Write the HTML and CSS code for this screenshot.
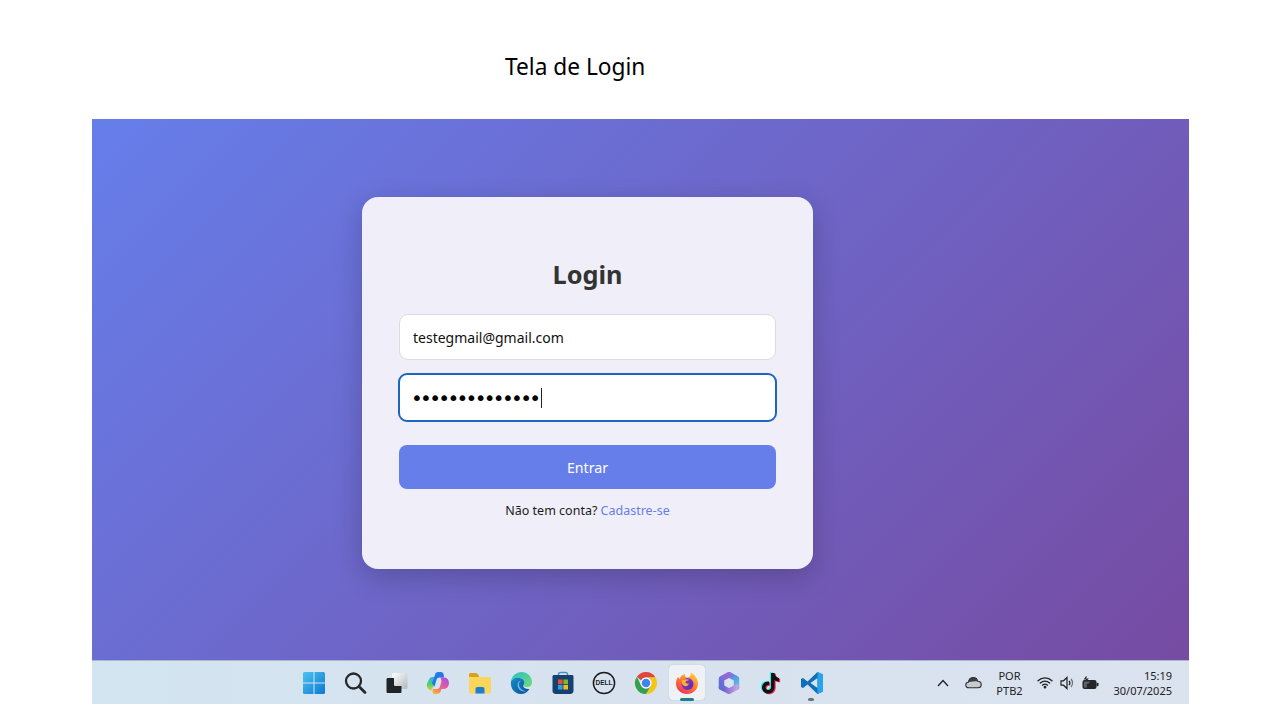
FILE: index.html
```html
<!DOCTYPE html>
<html lang="pt-BR">
<head>
  <meta charset="UTF-8">
  <title>Tela de Login</title>
  <link rel="stylesheet" href="styles.css">
</head>
<body>
  <p class="slide-title">Tela de Login</p>

  <div class="screen">
    <main class="hero">
      <div class="card">
        <h2>Login</h2>
        <div class="field">testegmail@gmail.com</div>
        <div class="field field-focus"><span class="dots">••••••••••••••</span><span class="caret"></span></div>
        <button class="btn">Entrar</button>
        <p class="signup">Não tem conta? <a href="#">Cadastre-se</a></p>
      </div>
    </main>

    <footer class="taskbar">
      <div class="apps">
        <!-- windows -->
        <div class="app">
          <svg width="24" height="24" viewBox="0 0 24 24">
            <defs>
              <linearGradient id="win" x1="0" y1="0" x2="1" y2="1">
                <stop offset="0" stop-color="#4fc3ee"/>
                <stop offset="1" stop-color="#0a78d4"/>
              </linearGradient>
            </defs>
            <path fill="url(#win)" d="M1 2.5A1.5 1.5 0 0 1 2.500 1H11.500V11.500H1ZM12.500 1H21.500A1.500 1.500 0 0 1 23 2.500V11.500H12.500ZM1 12.500H11.500V23H2.500A1.500 1.500 0 0 1 1 21.500ZM12.500 12.500H23V21.500A1.500 1.500 0 0 1 21.500 23H12.500Z"/>
          </svg>
        </div>
        <!-- search -->
        <div class="app">
          <svg width="24" height="24" viewBox="0 0 24 24" fill="none" stroke="#26282b" stroke-linecap="round">
            <circle cx="10.500" cy="10" r="7.500" stroke-width="2.300"/>
            <path d="M16 15.500 22 21.500" stroke-width="2.800"/>
          </svg>
        </div>
        <!-- task view -->
        <div class="app">
          <svg width="24" height="24" viewBox="0 0 24 24">
            <defs>
              <linearGradient id="tv" x1="0" y1="0" x2="1" y2="1">
                <stop offset="0" stop-color="#ffffff"/>
                <stop offset="1" stop-color="#b4b8bc"/>
              </linearGradient>
            </defs>
            <rect x="7" y="2" width="15.500" height="16" rx="1.500" fill="url(#tv)"/>
            <path fill="#222326" d="M3 7H9V13.500C9 14.500 9.500 15 10.500 15H16.500V20.500C16.500 21.500 16 22 15 22H3C2 22 1.500 21.500 1.500 20.500V8.500C1.500 7.500 2 7 3 7Z"/>
          </svg>
        </div>
        <!-- copilot -->
        <div class="app">
          <svg width="24" height="24" viewBox="0 0 24 24">
            <defs>
              <linearGradient id="cpA" x1="0" y1="0" x2="1" y2="1">
                <stop offset="0" stop-color="#1f8ff0"/>
                <stop offset="1" stop-color="#2b55d8"/>
              </linearGradient>
              <linearGradient id="cpB" x1="0.200" y1="1" x2="0.800" y2="0">
                <stop offset="0" stop-color="#f7b52e"/>
                <stop offset="0.450" stop-color="#f0608e"/>
                <stop offset="1" stop-color="#a84fe0"/>
              </linearGradient>
              <linearGradient id="cpC" x1="0.500" y1="0" x2="0.500" y2="1">
                <stop offset="0" stop-color="#28b4e0"/>
                <stop offset="0.550" stop-color="#4ccf6a"/>
                <stop offset="1" stop-color="#e9d03c"/>
              </linearGradient>
            </defs>
            <path fill="url(#cpC)" d="M3 8.500C3.700 6.800 5 6 7 6H10L6.500 17.500C6 19 5.200 20 3.800 19.200C1.500 17.800 0.300 15.500 1 12.800Z"/>
            <path fill="url(#cpA)" d="M9.500 2.300C10.300 1.400 11.300 1 12.500 1H15C16.200 1 17.200 1.800 17.500 3L18 6.500H13.500C12 6.500 11 7.300 10.500 8.800L8.300 16L6 12Z"/>
            <path fill="url(#cpB)" d="M14.500 6.500H18C20.200 6.500 21.700 7.500 22.500 9.500C23.500 12.500 22.800 15 21.300 16.500C20 17.800 18.500 18 17 18H15.500C15 20 13.800 23 11 23H8.500C7.300 23 6.300 22 6.500 20.500L7 18H11C12.500 18 13.500 17 14 15.500L15.500 10Z"/>
          </svg>
        </div>
        <!-- file explorer -->
        <div class="app">
          <svg width="24" height="24" viewBox="0 0 24 24">
            <path fill="#d9a21b" d="M1 3.500C1 2.700 1.700 2 2.500 2H8.500L11 4.500V8H1Z"/>
            <path fill="#fbd65a" d="M1 6H21.500C22.300 6 23 6.700 23 7.500V21C23 21.800 22.300 22.500 21.500 22.500H2.500C1.700 22.500 1 21.800 1 21Z"/>
            <path fill="#1b7fcf" d="M7.500 18C7.500 16.900 8.200 16 9.500 16H14.500C15.800 16 16.500 16.900 16.500 18V22.500H7.500Z"/>
          </svg>
        </div>
        <!-- edge -->
        <div class="app">
          <svg width="24" height="24" viewBox="0 0 24 24">
            <defs>
              <linearGradient id="edgeA" x1="0" y1="0" x2="1" y2="1">
                <stop offset="0" stop-color="#0f8fc8"/>
                <stop offset="1" stop-color="#0c4f9e"/>
              </linearGradient>
              <linearGradient id="edgeB" x1="0" y1="0" x2="1" y2="1">
                <stop offset="0" stop-color="#2cc0c8"/>
                <stop offset="1" stop-color="#6fdc72"/>
              </linearGradient>
            </defs>
            <path fill="url(#edgeB)" d="M2 10C3 4.500 7.500 1 12.500 1C18.500 1 23 5.500 23 11.500C23 14.500 21 16 18.500 16C16 16 14.500 15.300 14 14.500C15.500 13.500 16 12 15.500 10.500C14.500 7.500 11.500 6.500 8.500 6.800C5.500 7.100 3.300 8.300 2 10Z"/>
            <path fill="url(#edgeA)" d="M2 10C4 7.500 7 6.300 10 6.800C13.500 7.300 15.500 9.500 15.500 11.500C15.500 12.800 14.800 13.800 14 14.500C14.500 17 17 18.500 20.500 18C18.500 21 15.500 23 12 23C5.500 23 1 17.500 2 10Z"/>
            <path fill="#e9f2f8" d="M8.500 14C8.500 11.500 10 9.800 12 9.800C9.800 11 9.500 13.500 10.500 15.800C11.500 18 14 19.800 17 20.200C13 21.300 8.500 18.500 8.500 14Z" opacity="0.500"/>
          </svg>
        </div>
        <!-- store -->
        <div class="app">
          <svg width="24" height="24" viewBox="0 0 24 24">
            <path fill="none" stroke="#4a94c4" stroke-width="1.500" d="M7.500 5V3.500C7.500 2.300 8.300 1.500 9.500 1.500H14.500C15.700 1.500 16.500 2.300 16.500 3.500V5"/>
            <path fill="#16406f" d="M1.500 5.500C1.500 4.700 2.200 4 3 4H21C21.800 4 22.500 4.700 22.500 5.500V20C22.500 21.600 21.100 23 19.500 23H4.500C2.900 23 1.500 21.600 1.500 20Z"/>
            <rect x="7" y="8.500" width="4.600" height="4.600" fill="#ea4f2a"/>
            <rect x="12.400" y="8.500" width="4.600" height="4.600" fill="#7fb927"/>
            <rect x="7" y="13.900" width="4.600" height="4.600" fill="#2a9fe8"/>
            <rect x="12.400" y="13.900" width="4.600" height="4.600" fill="#fbbb12"/>
          </svg>
        </div>
        <!-- dell -->
        <div class="app">
          <svg width="24" height="24" viewBox="0 0 24 24">
            <circle cx="12" cy="12" r="10.600" fill="none" stroke="#1a1c20" stroke-width="1.500"/>
            <text class="dell-text" x="12" y="14.200" text-anchor="middle">DELL</text>
          </svg>
        </div>
        <!-- chrome -->
        <div class="app">
          <svg width="24" height="24" viewBox="0 0 24 24">
            <path fill="#e0463a" d="M12 1A11 11 0 0 1 21.530 6.500H12A5.500 5.500 0 0 0 7.100 9.500L2.900 5.800A11 11 0 0 1 12 1Z"/>
            <path fill="#f5c518" d="M21.530 6.500A11 11 0 0 1 12 23L16.760 14.750A5.500 5.500 0 0 0 16.760 9.250L14 6.500Z"/>
            <path fill="#34a04f" d="M2.900 5.800 7.240 14.750A5.500 5.500 0 0 0 16.760 14.750L12 23A11 11 0 0 1 2.900 5.800Z"/>
            <circle cx="12" cy="12" r="5.500" fill="#fff"/>
            <circle cx="12" cy="12" r="4.300" fill="#3f85ee"/>
          </svg>
        </div>
        <!-- firefox, running -->
        <div class="app app-active">
          <svg width="24" height="24" viewBox="0 0 24 24">
            <defs>
              <linearGradient id="ffA" x1="0.800" y1="0" x2="0.200" y2="1">
                <stop offset="0" stop-color="#ffd23c"/>
                <stop offset="0.500" stop-color="#ff7a2f"/>
                <stop offset="1" stop-color="#ef2a5c"/>
              </linearGradient>
              <linearGradient id="ffB" x1="0" y1="0" x2="1" y2="1">
                <stop offset="0" stop-color="#8a3fd0"/>
                <stop offset="1" stop-color="#5a2aa8"/>
              </linearGradient>
            </defs>
            <path fill="url(#ffA)" d="M15.500 1.500C19.500 3.500 23 7.500 23 12.500C23 18.500 18 23 12 23C6 23 1 18.500 1 12.500C1 10 1.800 7.500 3 6L4.500 8C5.500 5.500 7.500 3.800 10 3C9.500 4.500 10 5.800 11.500 6.500C14.500 6.500 16.500 5 15.500 1.500Z"/>
            <circle cx="12.500" cy="13" r="6" fill="url(#ffB)"/>
            <path fill="#ffb02e" d="M7 9.500C9 8 12.500 7.800 14.500 9C12.500 9.200 11 10 10.500 11C10.200 12 12 13 14 12.500C13.500 14.500 11.500 15.500 9.500 15C7.500 14.500 6.300 11.500 7 9.500Z"/>
          </svg>
        </div>
        <!-- m365 -->
        <div class="app">
          <svg width="24" height="24" viewBox="0 0 24 24" fill="none" stroke-width="5.500" stroke-linejoin="round" stroke-linecap="round">
            <defs>
              <linearGradient id="msA" gradientUnits="userSpaceOnUse" x1="5" y1="16" x2="14" y2="4">
                <stop offset="0" stop-color="#5a6fd8"/>
                <stop offset="1" stop-color="#a166d8"/>
              </linearGradient>
              <linearGradient id="msB" gradientUnits="userSpaceOnUse" x1="12" y1="4" x2="19" y2="16">
                <stop offset="0" stop-color="#5a7fe0"/>
                <stop offset="1" stop-color="#5cc4de"/>
              </linearGradient>
              <linearGradient id="msC" gradientUnits="userSpaceOnUse" x1="5" y1="16" x2="19" y2="16">
                <stop offset="0" stop-color="#6a58c8"/>
                <stop offset="1" stop-color="#c39be8"/>
              </linearGradient>
            </defs>
            <path stroke="url(#msB)" d="M12 3.800 19.500 7.800V16.200"/>
            <path stroke="url(#msC)" d="M19.500 16.200 12 20.200 4.500 16.200"/>
            <path stroke="url(#msA)" d="M4.500 16.200V7.800L12 3.800"/>
          </svg>
        </div>
        <!-- tiktok -->
        <div class="app">
          <svg width="24" height="24" viewBox="0 0 24 24">
            <path fill="#25f4ee" transform="translate(-1.200 -0.800)" d="M13 2H16.500C16.800 5 18.500 6.800 21 7V10.500C19.200 10.500 17.800 10 16.500 9V16C16.500 19.800 13.800 22.500 10 22.500C6.500 22.500 4 19.800 4 16.500C4 13 7 10 11 10.500V14C9 13.500 7.500 14.800 7.500 16.500C7.500 18 8.700 19 10 19C11.800 19 13 17.800 13 16Z"/>
            <path fill="#fe2c55" transform="translate(1.200 0.800)" d="M13 2H16.500C16.800 5 18.500 6.800 21 7V10.500C19.200 10.500 17.800 10 16.500 9V16C16.500 19.800 13.800 22.500 10 22.500C6.500 22.500 4 19.800 4 16.500C4 13 7 10 11 10.500V14C9 13.500 7.500 14.800 7.500 16.500C7.500 18 8.700 19 10 19C11.800 19 13 17.800 13 16Z"/>
            <path fill="#111" d="M13 2H16.500C16.800 5 18.500 6.800 21 7V10.500C19.200 10.500 17.800 10 16.500 9V16C16.500 19.800 13.800 22.500 10 22.500C6.500 22.500 4 19.800 4 16.500C4 13 7 10 11 10.500V14C9 13.500 7.500 14.800 7.500 16.500C7.500 18 8.700 19 10 19C11.800 19 13 17.800 13 16Z"/>
          </svg>
        </div>
        <!-- vs code, running -->
        <div class="app app-open">
          <svg width="24" height="24" viewBox="0 0 24 24">
            <path fill="#0f6fb8" d="M17.500 1 7.500 10.500 3 7 1 8V16L3 17 7.500 13.500 17.500 23 23 20.500V3.500ZM17.500 7V17L10.500 12Z"/>
            <path fill="#27a4ec" d="M17.500 1 23 3.500V20.500L17.500 23Z"/>
          </svg>
        </div>
      </div>

      <div class="tray">
        <svg class="chevron" width="12" height="8" viewBox="0 0 12 8" fill="none" stroke="#1f2124" stroke-width="1.300">
          <path d="M1 7 6 1.500 11 7"/>
        </svg>
        <svg class="cloud" width="17" height="13" viewBox="0 0 17 13">
          <path fill="#c7cbce" stroke="#2b2d30" stroke-width="1.100" d="M4 11.800C2 11.800 0.800 10.500 0.800 9C0.800 7.500 2 6.300 3.300 6.300C3.800 3.500 5.800 1.500 8.300 1.500C10.500 1.500 12.300 3 12.800 5.300C14.800 5.300 16.200 6.700 16.200 8.500C16.200 10.300 14.800 11.800 13 11.800Z"/>
          <path fill="#3a3c40" d="M3.300 6.300C3.800 3.500 5.800 1.500 8.300 1.500C10.500 1.500 12.300 3 12.800 5.300C9 5.300 6 5.500 3.300 6.300Z"/>
        </svg>
        <div class="lang">POR<br>PTB2</div>
        <div class="status">
          <svg width="16" height="13" viewBox="0 0 16 13" fill="none" stroke="#1f2124" stroke-width="1.300" stroke-linecap="round">
            <path d="M1 4.800C5 1 11 1 15 4.800"/>
            <path d="M3.300 7C6 4.600 10 4.600 12.700 7"/>
            <path d="M5.500 9.200C7 8 9 8 10.500 9.200"/>
            <circle cx="8" cy="11.200" r="0.700" fill="#1f2124"/>
          </svg>
          <svg width="15" height="14" viewBox="0 0 15 14" fill="none" stroke="#1f2124" stroke-width="1.200">
            <path d="M1 4.800H3.500L7 1.500V12.500L3.500 9.200H1Z"/>
            <path d="M9 4.800C10 6 10 8 9 9.200"/>
            <path d="M11 3C13 5.200 13 8.800 11 11" stroke="#6e7176"/>
          </svg>
          <svg width="17" height="14" viewBox="0 0 17 14">
            <rect x="0.500" y="4" width="14" height="9" rx="2" fill="#24262a"/>
            <rect x="14.500" y="6.700" width="2" height="3.600" rx="0.800" fill="#24262a"/>
            <path fill="#b9c3cc" d="M2 5.500H8L6.500 7.800H4.500L5 11.500H2Z" opacity="0.400"/>
            <path fill="none" stroke="#24262a" stroke-width="1.200" d="M4.500 0.500 2.800 3H5.500L3.800 5"/>
          </svg>
        </div>
        <div class="clock">15:19<br>30/07/2025</div>
      </div>
    </footer>
  </div>
</body>
</html>
```

FILE: styles.css
```css
:root {
  --accent: #667eea;
  --accent-dark: #764ba2;
  --card-bg: #f0eff9;
  --text-dark: #333333;
  --focus: #1a66c0;
}
body {
  font-family: 'Noto Sans', 'Open Sans', sans-serif;
  background: #ffffff;
  margin: 0;
  overflow: hidden;
}
.slide-title {
  margin: 0;
  height: 119px;
  padding: 50px 0 0 505px;
  box-sizing: border-box;
  font-size: 22.700px;
  line-height: 34px;
  color: #000000;
}
.screen {
  width: 1097px;
  height: 585px;
  margin-left: 92px;
  display: flex;
  flex-direction: column;
}
.hero {
  flex: 1;
  padding: 78px 0 0 270px;
  background: linear-gradient(135deg, var(--accent) 0%, var(--accent-dark) 100%);
}
.card {
  width: 451px;
  height: 372px;
  padding: 58px 37px 0;
  box-sizing: border-box;
  background: var(--card-bg);
  border-radius: 16px;
  box-shadow: 0 8px 28px rgba(0,0,0,0.2);
}
h2 {
  margin: 0 0 21px;
  height: 38px;
  line-height: 38px;
  text-align: center;
  font-size: 25.300px;
  font-weight: 700;
  color: var(--text-dark);
}
.field {
  height: 46px;
  margin-bottom: 13px;
  padding: 0 13px;
  display: flex;
  align-items: center;
  box-sizing: border-box;
  background: #ffffff;
  border: 1px solid #dcdcdc;
  border-radius: 9px;
  font-size: 14px;
  color: #111111;
}
.field-focus {
  height: 49px;
  margin: 0 -1px 23px;
  padding: 0 13px 0 11px;
  border: 2px solid var(--focus);
}
.dots {
  font-family: 'DejaVu Sans', sans-serif;
  font-size: 20px;
  letter-spacing: -2.700px;
  color: #000000;
}
.caret {
  width: 1px;
  height: 20px;
  margin-left: 3px;
  background: #222222;
}
.btn {
  display: block;
  width: 100%;
  height: 44px;
  padding: 0;
  border: none;
  border-radius: 8px;
  background: var(--accent);
  color: #ffffff;
  font-family: inherit;
  font-size: 14.200px;
  cursor: pointer;
}
.signup {
  margin: 13px 0 0;
  text-align: center;
  font-size: 12.500px;
  line-height: 18px;
  color: #1b1b1b;
}
.signup a {
  color: var(--accent);
  text-decoration: none;
}
.taskbar {
  height: 44px;
  flex: none;
  padding: 0 17px 0 201px;
  display: flex;
  align-items: center;
  box-sizing: border-box;
  background: linear-gradient(90deg, #d2e5f0 0%, #d8e2ef 50%, #dae3ee 100%);
  border-top: 1px solid #a9b7cf;
}
.apps {
  display: flex;
  align-items: center;
}
.app {
  width: 41.500px;
  height: 35px;
  display: flex;
  align-items: center;
  justify-content: center;
  position: relative;
  border-radius: 4px;
}
.app-active {
  background: #eef1f6;
  box-shadow: 0 0 1px rgba(0,0,0,0.25);
  width: 36px;
  margin: 0 2.750px;
}
.app-active::after {
  content: "";
  position: absolute;
  left: 11px;
  bottom: -1px;
  width: 14px;
  height: 3px;
  border-radius: 2px;
  background: #1d7e88;
}
.app-open::after {
  content: "";
  position: absolute;
  left: 17px;
  bottom: -1px;
  width: 6px;
  height: 3px;
  border-radius: 2px;
  background: #6d7278;
}
.dell-text {
  font-family: 'Liberation Sans', sans-serif;
  font-size: 6.500px;
  font-weight: 700;
  fill: #1a1c20;
}
.tray {
  margin-left: auto;
  display: flex;
  align-items: center;
  font-size: 11px;
  line-height: 15px;
  color: #1f2124;
}
.chevron {
  margin-right: 16px;
}
.cloud {
  margin-right: 5px;
}
.lang {
  width: 44px;
  text-align: center;
  margin-right: 6px;
}
.status {
  display: flex;
  align-items: center;
  gap: 7px;
  margin-right: 14px;
}
.clock {
  text-align: right;
}
```
